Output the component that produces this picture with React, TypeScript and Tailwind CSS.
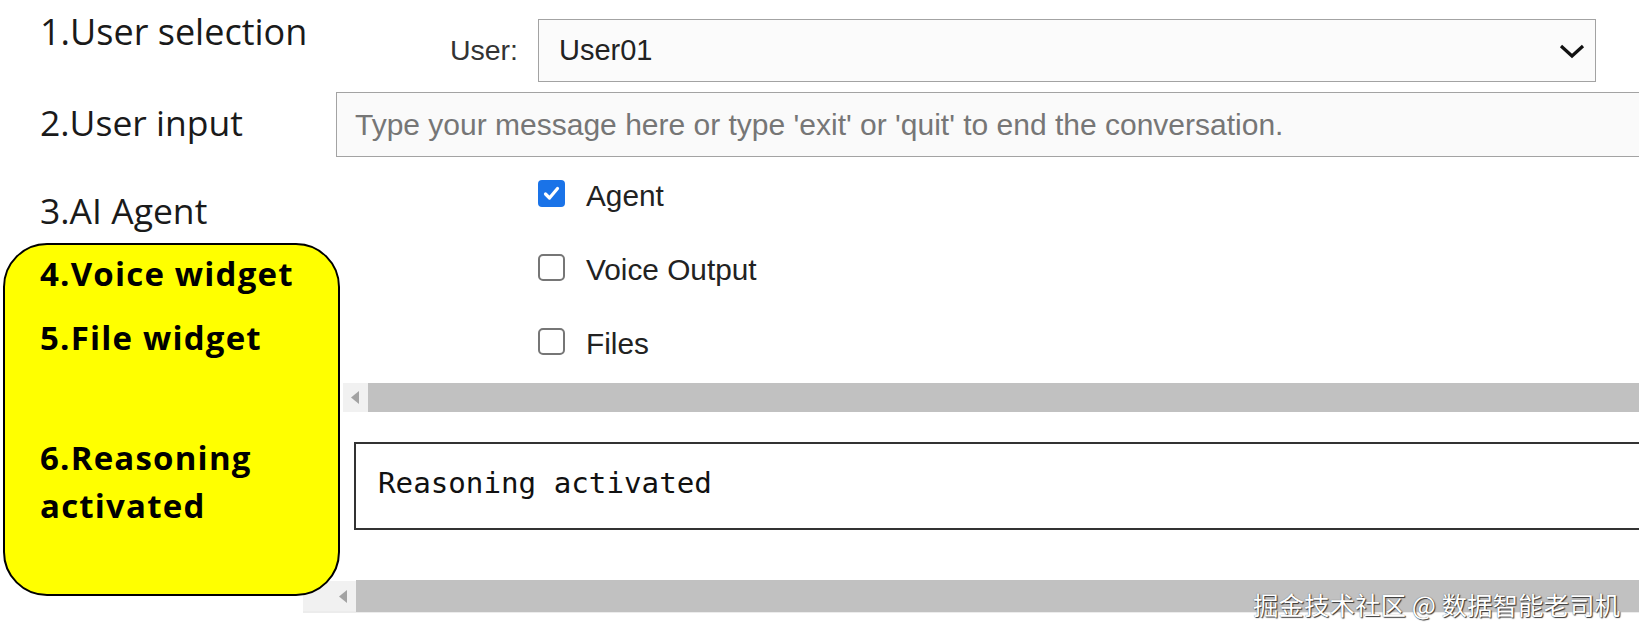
import React from "react";

function ScrollArrow() {
  return (
    <svg width="9" height="13" viewBox="0 0 9 13" className="shrink-0">
      <polygon points="8,0 8,13 0,6.5" fill="#a3a3a3" />
    </svg>
  );
}

function Checkbox({ checked, label }: { checked: boolean; label: string }) {
  return (
    <div className="flex items-center h-[27px] pl-[202px] gap-[21px]">
      {checked ? (
        <div className="w-[27px] h-[27px] rounded-[4px] bg-[#1a73e8] flex items-center justify-center">
          <svg width="19" height="19" viewBox="0 0 19 19">
            <polyline points="3.5,10 7.5,14 15.5,4.5" fill="none" stroke="white" strokeWidth="3.2" strokeLinecap="round" strokeLinejoin="round" />
          </svg>
        </div>
      ) : (
        <div className="w-[27px] h-[27px] rounded-[5px] border-2 border-[#767676] bg-white" />
      )}
      <span className="text-[29.8px] leading-[34px] mt-[4px] text-[#222] font-['Liberation_Sans',Arial,sans-serif]">{label}</span>
    </div>
  );
}

export default function App() {
  return (
    <div className="relative w-[1639px] h-[637px] overflow-hidden bg-white flex">
      {/* left annotation column */}
      <div className="w-[336px] shrink-0 flex flex-col relative z-10 font-['Open_Sans',sans-serif] text-[#1a1a1a]">
        <div className="pl-[40px] mt-[12px] h-[40px] leading-[40px] text-[36px] whitespace-nowrap">1.User selection</div>
        <div className="pl-[40px] mt-[50px] h-[40px] leading-[40px] text-[35.5px] whitespace-nowrap">2.User input</div>
        <div className="pl-[40px] mt-[48px] h-[40px] leading-[40px] text-[35.5px] whitespace-nowrap">3.AI Agent</div>
        <div className="ml-[3px] mt-[13px] w-[337px] h-[353px] shrink-0 rounded-[44px] border-2 border-black bg-[#ffff00] pl-[35px] pt-[9px] flex flex-col font-bold text-[33px] text-black tracking-[1.2px] whitespace-nowrap">
          <div className="h-[40px] leading-[40px]">4.Voice widget</div>
          <div className="h-[40px] leading-[40px] mt-[24px]">5.File widget</div>
          <div className="leading-[48px] mt-[76px]">
            6.Reasoning
            <br />
            activated
          </div>
        </div>
      </div>

      {/* widget column */}
      <div className="flex-1 min-w-0 flex flex-col font-['Liberation_Sans',Arial,sans-serif]">
        <div className="mt-[19px] h-[63px] flex items-center shrink-0">
          <div className="w-[202px] pr-[20px] text-right text-[28.5px] text-[#333]">User:</div>
          <div className="w-[1058px] h-[63px] shrink-0 border-[1.5px] border-[#a3a3a3] bg-[#fbfbfb] flex items-center justify-between pl-[20px] pr-[10px]">
            <span className="text-[29px] text-[#222]">User01</span>
            <svg width="26" height="16" viewBox="0 0 26 16">
              <polyline points="2,3 13,13 24,3" fill="none" stroke="#111" strokeWidth="3.2" strokeLinejoin="miter" />
            </svg>
          </div>
        </div>
        <div className="mt-[10px] h-[65px] w-[1320px] shrink-0 border-[1.5px] border-[#a3a3a3] bg-[#fafafa] flex items-center pl-[18px]">
          <span className="text-[30px] text-[#767676] whitespace-nowrap">
            Type your message here or type 'exit' or 'quit' to end the conversation.
          </span>
        </div>
        <div className="mt-[23px] flex flex-col gap-[47px]">
          <Checkbox checked label="Agent" />
          <Checkbox checked={false} label="Voice Output" />
          <Checkbox checked={false} label="Files" />
        </div>
        <div className="mt-[28px] ml-[7px] h-[29px] w-[1400px] shrink-0 bg-[#f1f1f1] flex items-center">
          <div className="w-[25px] flex justify-center">
            <ScrollArrow />
          </div>
          <div className="flex-1 h-[29px] bg-[#c1c1c1]" />
        </div>
        <div className="mt-[30px] ml-[18px] h-[88px] w-[1400px] shrink-0 border-2 border-[#333] bg-white flex items-center pl-[22px] pb-[4px]">
          <span className="text-[29.2px] text-[#111] font-['DejaVu_Sans_Mono',monospace] whitespace-nowrap">Reasoning activated</span>
        </div>
        <div className="mt-[51px] ml-[-33px] h-[32px] w-[1450px] shrink-0 bg-[#f1f1f1] flex items-center border-b-2 border-[#ececec]">
          <div className="w-[53px] flex justify-end pr-[8px]">
            <ScrollArrow />
          </div>
          <div className="flex-1 h-[32px] bg-[#c1c1c1]" />
        </div>
      </div>

      <div className="absolute right-[19px] bottom-[16px] text-[25.5px] leading-[34px] text-white font-['Noto_Sans_CJK_SC','Noto_Sans',sans-serif] [text-shadow:1px_1px_1px_#333,0_0_1px_#555] whitespace-nowrap">
        掘金技术社区 @ 数据智能老司机
      </div>
    </div>
  );
}
